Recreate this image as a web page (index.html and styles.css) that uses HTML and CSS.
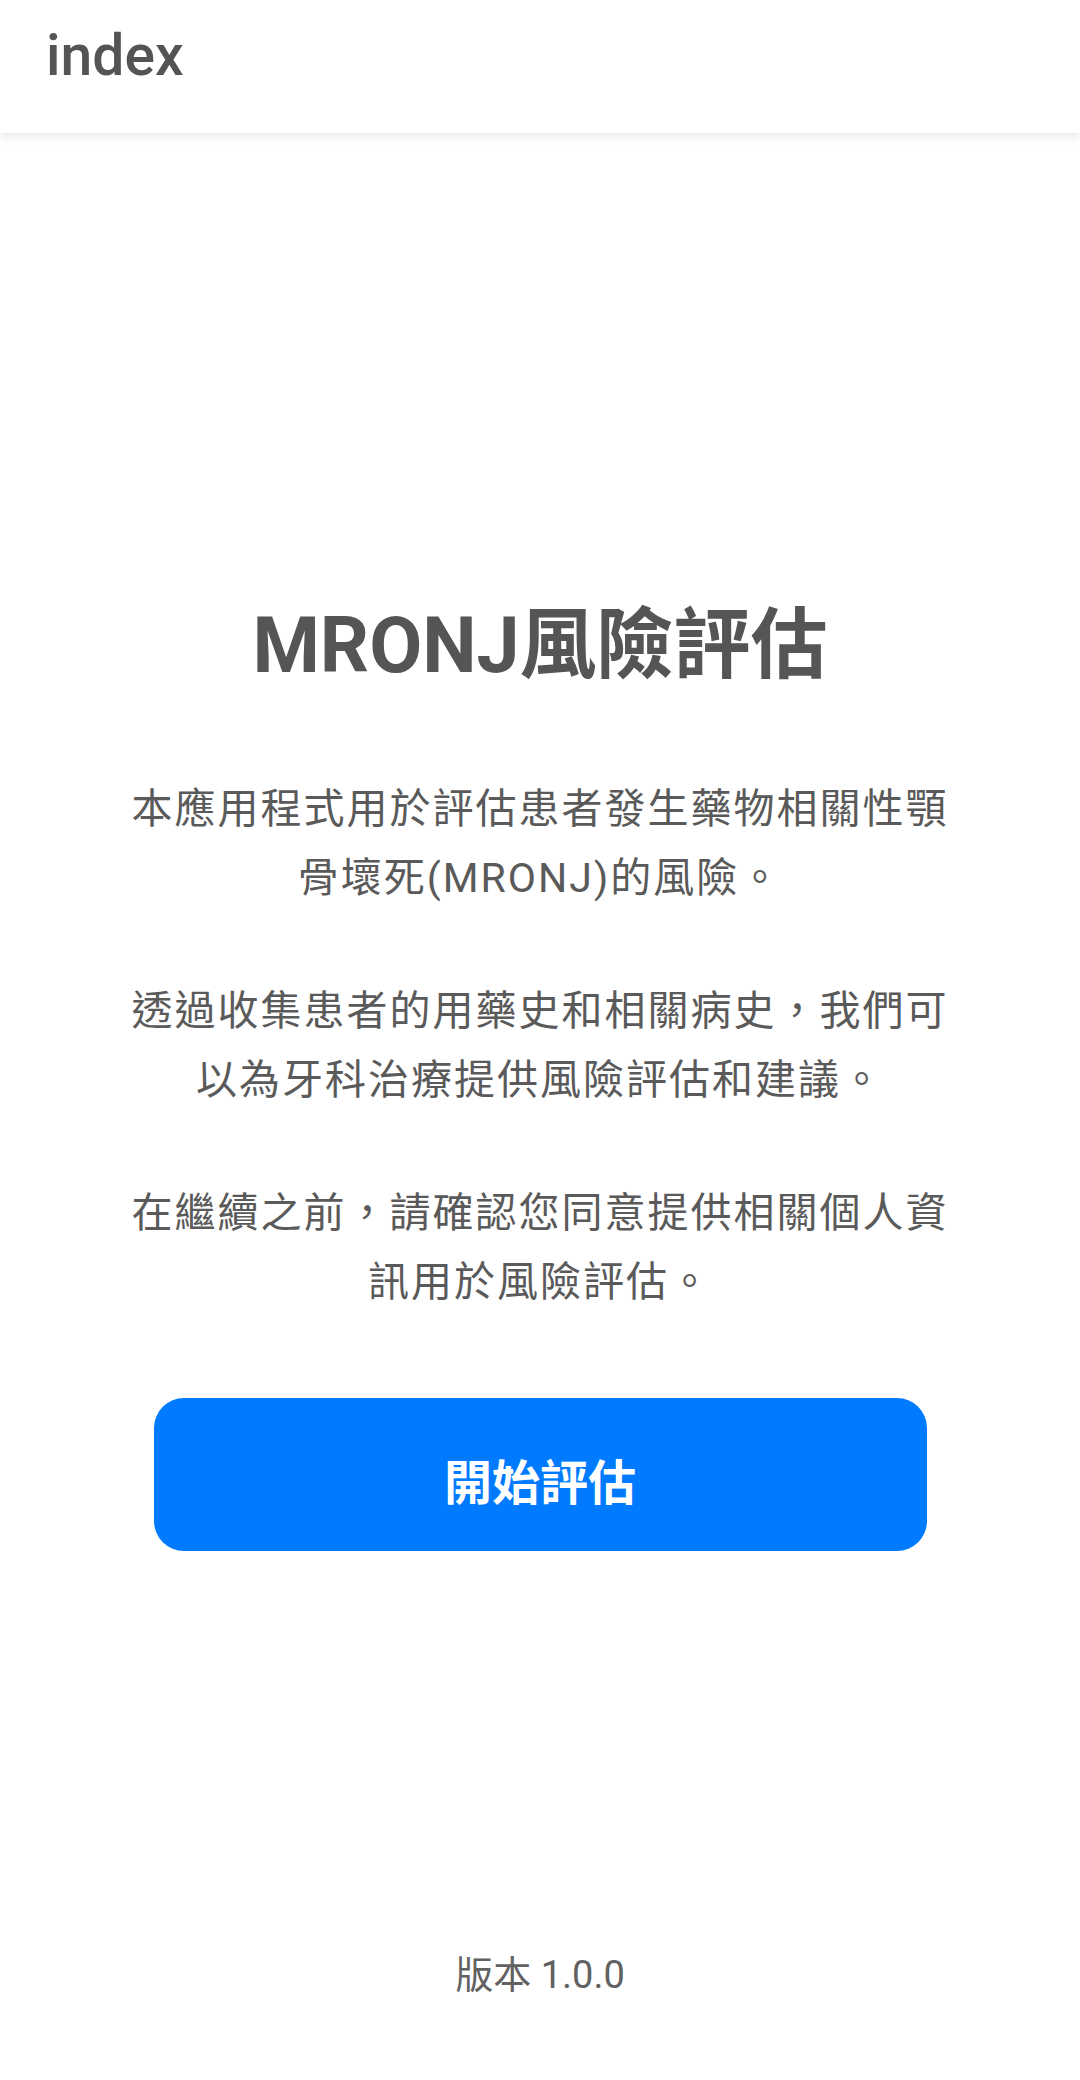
FILE: index.html
```html
<!DOCTYPE html>
<html lang="zh-Hant">
<head>
<meta charset="utf-8">
<title>index</title>
<link rel="stylesheet" href="styles.css">
</head>
<body>
<div class="app">
  <header class="topbar">
    <span class="topbar-title">index</span>
  </header>
  <main class="content">
    <h1 class="title">MRONJ風險評估</h1>
    <p class="para">本應用程式用於評估患者發生藥物相關性顎骨壞死(MRONJ)的風險。</p>
    <p class="para">透過收集患者的用藥史和相關病史，我們可以為牙科治療提供風險評估和建議。</p>
    <p class="para">在繼續之前，請確認您同意提供相關個人資訊用於風險評估。</p>
    <button class="start-btn" type="button">開始評估</button>
  </main>
  <footer class="footer">
    <span class="version">版本 1.0.0</span>
  </footer>
</div>
</body>
</html>
```

FILE: styles.css
```css
html, body {
  margin: 0;
  padding: 0;
  background: #ffffff;
}

body {
  font-family: Roboto, "Noto Sans CJK TC", "Noto Sans", sans-serif;
  color: #555555;
}

.app {
  width: 1080px;
  height: 2080px;
  display: flex;
  flex-direction: column;
  overflow: hidden;
}

.topbar {
  height: 133px;
  flex: 0 0 133px;
  background: #ffffff;
  display: flex;
  align-items: center;
  padding-left: 46px;
  box-sizing: border-box;
  box-shadow: 0 3px 10px rgba(0, 0, 0, 0.10);
  position: relative;
  z-index: 1;
}

.topbar-title {
  font-size: 57px;
  font-weight: 500;
  color: #545454;
  line-height: 1;
  margin-top: -22px;
}

.content {
  flex: 1 1 auto;
  display: flex;
  flex-direction: column;
  align-items: center;
  padding-top: 466px;
}

.title {
  margin: 0;
  font-size: 77px;
  line-height: 94px;
  font-weight: 700;
  color: #555555;
  text-align: center;
}

.para {
  margin: 64px 0 0 0;
  width: 840px;
  font-size: 41px;
  line-height: 69px;
  letter-spacing: 2px;
  color: #5a5a5a;
  text-align: center;
}

.title + .para {
  margin-top: 82px;
}

.start-btn {
  margin-top: 81px;
  width: 773px;
  height: 153px;
  border: none;
  border-radius: 30px;
  background: #007bff;
  color: #ffffff;
  font-family: Roboto, "Noto Sans CJK TC", sans-serif;
  font-size: 48px;
  font-weight: 700;
  padding: 8px 0 0 0;
}

.footer {
  flex: 0 0 auto;
  display: flex;
  justify-content: center;
  padding-bottom: 80px;
}

.version {
  font-size: 38px;
  line-height: 50px;
  color: #616161;
}
```
